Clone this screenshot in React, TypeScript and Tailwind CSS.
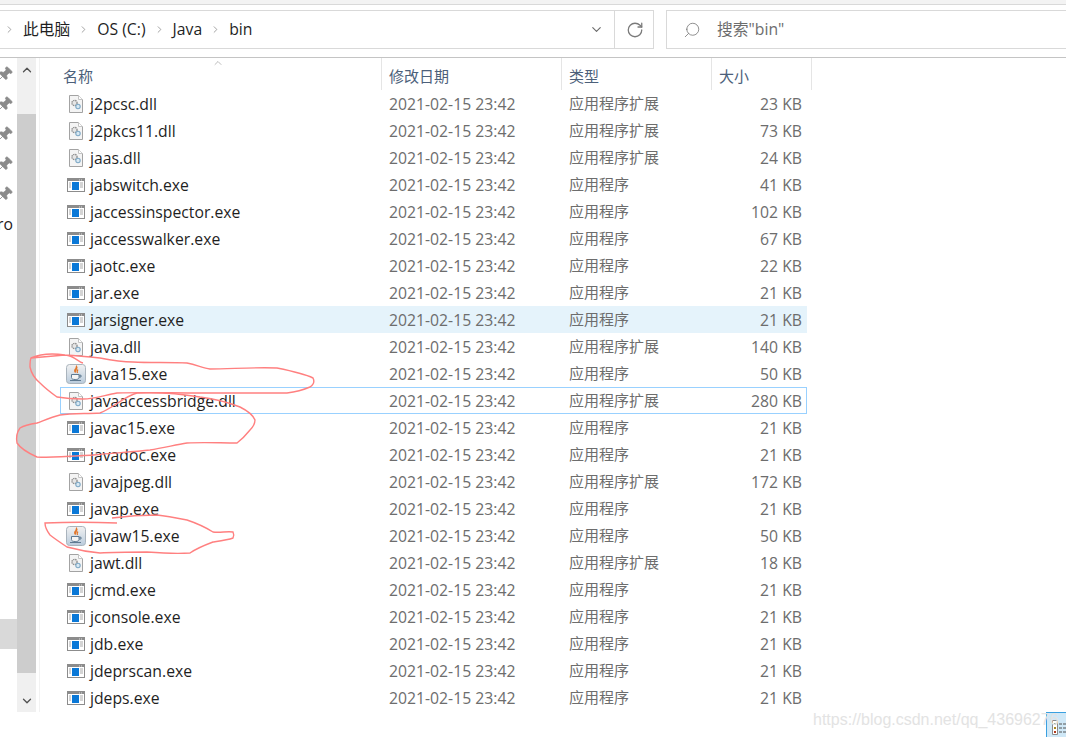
import React from 'react';
import { ChevronDown, ChevronRight, ChevronUp, Pin, RotateCw, Search } from 'lucide-react';

type FileRow = { name: string; size: string };

const files: FileRow[] = [
  { name: 'j2pcsc.dll', size: '23 KB' },
  { name: 'j2pkcs11.dll', size: '73 KB' },
  { name: 'jaas.dll', size: '24 KB' },
  { name: 'jabswitch.exe', size: '41 KB' },
  { name: 'jaccessinspector.exe', size: '102 KB' },
  { name: 'jaccesswalker.exe', size: '67 KB' },
  { name: 'jaotc.exe', size: '22 KB' },
  { name: 'jar.exe', size: '21 KB' },
  { name: 'jarsigner.exe', size: '21 KB' },
  { name: 'java.dll', size: '140 KB' },
  { name: 'java15.exe', size: '50 KB' },
  { name: 'javaaccessbridge.dll', size: '280 KB' },
  { name: 'javac15.exe', size: '21 KB' },
  { name: 'javadoc.exe', size: '21 KB' },
  { name: 'javajpeg.dll', size: '172 KB' },
  { name: 'javap.exe', size: '21 KB' },
  { name: 'javaw15.exe', size: '50 KB' },
  { name: 'jawt.dll', size: '18 KB' },
  { name: 'jcmd.exe', size: '21 KB' },
  { name: 'jconsole.exe', size: '21 KB' },
  { name: 'jdb.exe', size: '21 KB' },
  { name: 'jdeprscan.exe', size: '21 KB' },
  { name: 'jdeps.exe', size: '21 KB' },
];

const DllIcon = () => (
  <svg width="16" height="20" viewBox="0 0 16 20" className="block">
    <path d="M1.5 1.5H10.5L14.5 5.5V18.5H1.5Z" fill="#f4f4f4" stroke="#a3a3a3" />
    <path d="M10.5 1.5V5.5H14.5" fill="#fff" stroke="#c4c4c4" />
    <circle cx="6.5" cy="9" r="2.6" fill="#e6e6e6" stroke="#8c8c8c" strokeWidth="1.3" strokeDasharray="1.4 0.7" />
    <circle cx="10" cy="12.5" r="2.2" fill="#d8e8f2" stroke="#7fa9c6" strokeWidth="1.1" />
  </svg>
);

const ExeIcon = () => (
  <svg width="18" height="14" viewBox="0 0 18 14" className="block">
    <rect x="0.5" y="0.5" width="17" height="13" fill="#fff" stroke="#8c8c8c" />
    <rect x="1" y="1" width="16" height="2" fill="#8c8c8c" />
    <path d="M12 2h1M14 2h1" stroke="#dcdcdc" />
    <rect x="5" y="4" width="7" height="8" fill="#0a78d7" />
    <path d="M2 5h2M2 7h2M2 9h2M13 5h3M13 7h3M13 9h3" stroke="#a9a9a9" />
  </svg>
);

const JavaIcon = () => (
  <svg width="20" height="20" viewBox="0 0 20 20" className="block">
    <defs>
      <linearGradient id="javaBg" x1="0" y1="0" x2="0" y2="1">
        <stop offset="0" stopColor="#f2f2f2" />
        <stop offset="1" stopColor="#b9cbdc" />
      </linearGradient>
    </defs>
    <rect x="0.5" y="0.5" width="19" height="19" rx="3" fill="url(#javaBg)" stroke="#aab4bd" />
    <path d="M10.5 2.5C12.5 5 8 6 9.5 8.5C8 7 9 5.5 10 4.5ZM12 5.5C10.5 7 11 8 11.5 9" fill="none" stroke="#e2762a" strokeWidth="1.3" />
    <path d="M5.5 10.5H13V13.5C13 15 11.5 15.5 9.2 15.5C7 15.5 5.5 15 5.5 13.5Z" fill="#f5f5f5" stroke="#5f7a92" />
    <path d="M13 11.2H15V13H13M4 16.5H15" fill="none" stroke="#5f7a92" />
  </svg>
);

const FileIcon = ({ name }: { name: string }) => {
  if (name.endsWith('.dll')) return <DllIcon />;
  if (name === 'java15.exe' || name === 'javaw15.exe') return <JavaIcon />;
  return <ExeIcon />;
};

const Crumb = ({ label }: { label: string }) => (
  <div className="flex items-center">
    <ChevronRight size={11} strokeWidth={1.5} className="text-[#7a7a7a]" />
    <span className="mx-[8px]">{label}</span>
  </div>
);

const App: React.FC = () => {
  return (
    <div className="relative h-[737px] w-[1066px] overflow-hidden bg-white font-['Open_Sans','Noto_Sans_CJK_SC',sans-serif] text-[15.75px] text-[#1f1f1f]">
      <div className="h-[5px] border-b border-[#d9d9d9] bg-[#f3f3f3]" />

      {/* address bar */}
      <div className="flex h-[53px] gap-[12px] border-b border-[#c4c4c4] pt-[5px]">
        <div className="flex h-[39px] w-[654px] border border-l-0 border-[#d9d9d9]">
          <div className="flex flex-1 items-center pl-[4px]">
            {['此电脑', 'OS (C:)', 'Java', 'bin'].map((c) => (
              <Crumb key={c} label={c} />
            ))}
          </div>
          <div className="flex w-[28px] items-center justify-center pr-[8px]">
            <ChevronDown size={15} strokeWidth={1.8} className="text-[#6b6b6b]" />
          </div>
          <div className="flex w-[39px] items-center justify-center border-l border-[#d9d9d9] pl-[1px]">
            <RotateCw size={18} strokeWidth={1.7} className="text-[#7a7a7a]" />
          </div>
        </div>
        <div className="flex h-[39px] flex-1 items-center border border-r-0 border-[#d9d9d9] pl-[16px] text-[#6d6d6d]">
          <Search size={18} strokeWidth={1} className="-scale-x-100" />
          <span className="ml-[16px]">搜索"bin"</span>
        </div>
      </div>

      <div className="flex h-[654px]">
        {/* navigation pane, cut off at the left */}
        <div className="relative w-[17px] overflow-hidden">
          <div className="flex flex-col items-center gap-[14px] pt-[8px] pr-[7px]">
            {[0, 1, 2, 3, 4].map((i) => (
              <Pin key={i} size={16} fill="#8a8a8a" strokeWidth={1.2} className="rotate-45 text-[#8a8a8a]" />
            ))}
          </div>
          <div className="mt-[11px] -ml-[3px] whitespace-nowrap text-[#222]">
            ro <span className="text-[#d9822b]">'</span>
          </div>
          <div className="mt-[382px] h-[30px] bg-[#d9d9d9]" />
        </div>

        {/* scrollbar */}
        <div className="flex w-[19px] flex-col bg-[#f0f0f0]">
          <div className="flex h-[23px] items-center justify-center">
            <ChevronUp size={14} strokeWidth={2.2} className="text-[#505050]" />
          </div>
          <div className="mt-[33px] h-[559px] bg-[#cdcdcd]" />
          <div className="flex flex-1 items-end justify-center pb-[4px]">
            <ChevronDown size={14} strokeWidth={2.2} className="text-[#505050]" />
          </div>
        </div>
        <div className="ml-[3px] w-px bg-[#f2f2f2]" />

        {/* file list */}
        <div className="relative flex-1">
          <ChevronUp size={12} strokeWidth={1} className="absolute top-[-1px] left-[172px] text-[#7a7a7a]" />
          <div className="flex h-[32px] items-center text-[15px] text-[#4c607a]">
            <div className="h-full w-[341px] pt-[7px] pl-[23px]">名称</div>
            <div className="h-full w-[180px] border-l border-[#e5e5e5] pt-[7px] pl-[7px]">修改日期</div>
            <div className="h-full w-[150px] border-l border-[#e5e5e5] pt-[7px] pl-[7px]">类型</div>
            <div className="h-full w-[101px] border-x border-[#e5e5e5] pt-[7px] pl-[7px]">大小</div>
          </div>
          <div className="ml-[20px] w-[747px]">
            {files.map((f) => {
              const selected = f.name === 'jarsigner.exe';
              const focused = f.name === 'javaaccessbridge.dll';
              return (
                <div
                  key={f.name}
                  className={`flex h-[27px] items-center border ${
                    selected ? 'border-transparent bg-[#e5f3fb]' : focused ? 'border-[#99d1ff]' : 'border-transparent'
                  }`}
                >
                  <div className="flex w-[29px] shrink-0 justify-center pl-[1px]">
                    <FileIcon name={f.name} />
                  </div>
                  <div className="w-[299px] shrink-0 pt-[2px]">{f.name}</div>
                  <div className="w-[180px] shrink-0 pt-[2px] text-[#6d6d6d]">2021-02-15 23:42</div>
                  <div className="w-[140px] shrink-0 text-[15px] text-[#6d6d6d]">{f.name.endsWith('.dll') ? '应用程序扩展' : '应用程序'}</div>
                  <div className="w-[93px] shrink-0 pt-[2px] text-right text-[#6d6d6d]">{f.size}</div>
                </div>
              );
            })}
          </div>
        </div>
      </div>

      {/* red marker rings drawn over the screenshot */}
      <svg width="1066" height="737" className="pointer-events-none absolute top-0 left-0" fill="none" stroke="#ff8080" strokeWidth="1.4">
        <path d="M31 358C40 354 52 353 65 355C75 356 78 362 83 363M65 355C80 356 90 357 100 358C115 361 125 362 133 362C150 363 170 362 187 363C197 365 203 368 210 369C230 369 255 367 277 368C292 371 305 374 313 378C315 382 313 385 310 387C303 390 295 392 287 393C260 393 230 393 200 393C170 393 145 392 117 393C105 395 95 399 83 399C72 399 63 398 57 397C50 392 45 388 40 383C34 378 31 372 30 367C30 363 30 360 31 358Z" />
        <path d="M137 393C160 392 182 394 200 397C215 399 230 403 240 407C248 411 253 415 255 420C255 424 253 427 250 430C246 435 241 440 237 443C220 443 204 442 187 443C175 445 163 448 150 450C132 452 112 453 93 455C75 456 55 458 37 457C28 453 21 449 17 443C16 437 17 432 20 428C25 425 31 424 37 423C45 420 52 417 60 415C73 413 87 414 100 413C113 408 125 396 137 393Z" />
        <path d="M117 523C92 522 68 522 45 523C45 527 47 531 50 535C55 539 61 543 67 547C78 550 89 552 100 553C115 552 131 552 147 552C160 553 176 554 190 553C197 548 205 545 213 542C220 541 228 540 233 538C234 536 234 534 233 532C227 531 220 533 213 532C205 527 196 523 187 520C177 518 167 516 157 515C142 515 127 516 112 518" />
      </svg>

      {/* corner tray icon and watermark */}
      <div className="absolute top-[712px] left-[1046px] h-[25px] w-[20px] border-t border-l border-[#3aa0e0] bg-[#cfe8f7]">
        <svg width="19" height="24" viewBox="0 0 19 24" className="block">
          <path d="M5.5 7.5H10.5V21.5H5.5Z" fill="#fff" stroke="#8a8a8a" />
          <path d="M7 10h2v2H7Z" fill="#7f8f5a" />
          <path d="M7 14h2v2H7Z" fill="#a8861f" />
          <path d="M7 18h2v2H7Z" fill="#b23b1e" />
          <path d="M12 11h7M12 15h7M12 19h7" stroke="#555" strokeDasharray="3 1" />
        </svg>
      </div>
      <div className="absolute top-[708px] left-[813px] font-['Liberation_Sans',sans-serif] text-[16px] whitespace-nowrap text-[#e3e3e3]">
        https://blog.csdn.net/qq_43696276
      </div>
    </div>
  );
};

export default App;
